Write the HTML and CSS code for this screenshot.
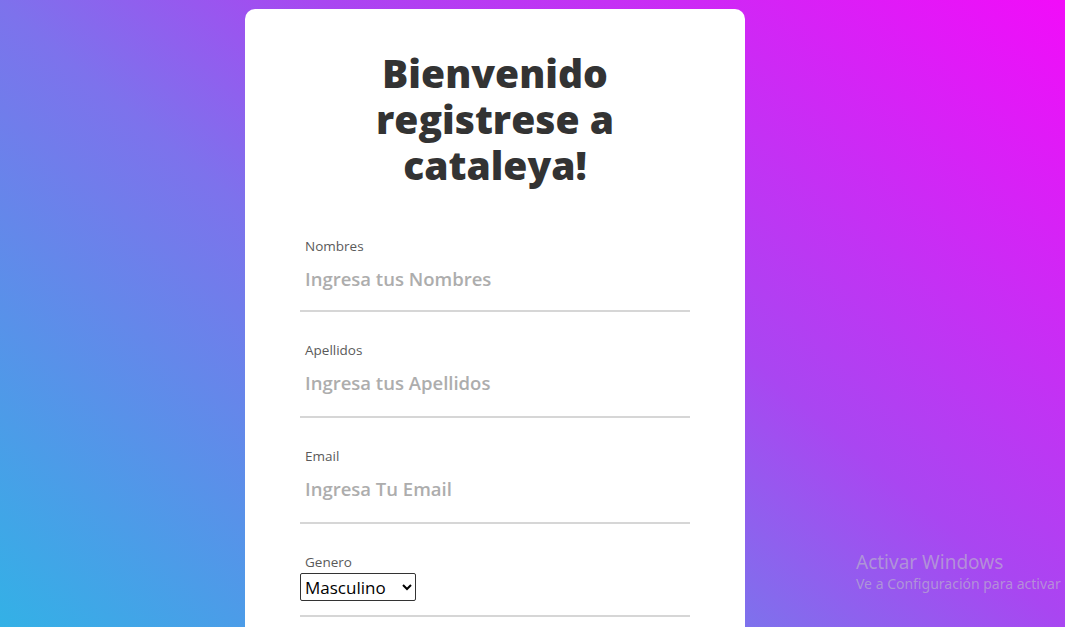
FILE: index.html
```html
<!DOCTYPE html>
<html lang="es">
<head>
<meta charset="utf-8">
<title>Registro cataleya</title>
<link rel="stylesheet" href="styles.css">
</head>
<body>
<main class="page">
  <section class="card">
    <h1 class="title">Bienvenido registrese a cataleya!</h1>
    <form class="form">
      <div class="field">
        <label class="label" for="nombres">Nombres</label>
        <input class="input" id="nombres" type="text" placeholder="Ingresa tus Nombres">
      </div>
      <div class="field">
        <label class="label" for="apellidos">Apellidos</label>
        <input class="input" id="apellidos" type="text" placeholder="Ingresa tus Apellidos">
      </div>
      <div class="field">
        <label class="label" for="email">Email</label>
        <input class="input" id="email" type="email" placeholder="Ingresa Tu Email">
      </div>
      <div class="field field-select">
        <label class="label" for="genero">Genero</label>
        <select class="select" id="genero">
          <option>Masculino</option>
          <option>Femenino</option>
        </select>
      </div>
    </form>
  </section>
</main>
<div class="watermark">
  <div class="wm-title">Activar Windows</div>
  <div class="wm-sub">Ve a Configuración para activar</div>
</div>
</body>
</html>
```
FILE: styles.css
```css
* { box-sizing: border-box; }
html, body { height: 100%; }
body {
  margin: 0;
  overflow: hidden;
  font-family: "Open Sans", "Noto Sans", sans-serif;
  background: linear-gradient(40deg, #33b1e6 0%, #7d72ec 41%, #a946f1 59%, #f20cf9 100%);
}
.page {
  padding: 9px 0 0 245px;
}
.card {
  width: 500px;
  min-height: 700px;
  background: #fff;
  border-radius: 10px;
  padding: 41px 55px 0;
}
.title {
  margin: 0 auto 48px;
  width: 270px;
  text-align: center;
  font-size: 39px;
  line-height: 46px;
  font-weight: 800;
  color: #333;
}
.form { display: flex; flex-direction: column; }
.field {
  display: flex;
  flex-direction: column;
  height: 106px;
  padding: 0 5px;
  border-bottom: 2px solid #d6d6d6;
}
.form .field:first-child { height: 76px; }
.field:not(:first-child) { padding-top: 28px; }
.label {
  font-size: 13.5px;
  line-height: 20px;
  color: #5a5a5a;
}
.input {
  border: none;
  outline: none;
  padding: 0;
  margin-top: 9px;
  height: 26px;
  font-family: inherit;
  font-size: 18.5px;
  font-weight: 600;
  color: #333;
  background: transparent;
}
.input::placeholder { color: #adadad; }
.field-select { height: 93px; padding-left: 0; }
.field-select .label { padding-left: 5px; }
.select {
  align-self: flex-start;
  width: 116px;
  height: 28px;
  margin-top: 1px;
  font-family: inherit;
  font-size: 17px;
  color: #000;
  background: #fff;
  border: 1px solid #333;
  border-radius: 2px;
  padding: 0;
}
.watermark {
  position: absolute;
  left: 856px;
  top: 550px;
  white-space: nowrap;
  color: rgba(190, 190, 200, 0.6);
  font-family: "Noto Sans", "Open Sans", sans-serif;
}
.wm-title { font-size: 19px; line-height: 24px; }
.wm-sub { font-size: 14px; line-height: 20px; }
```
